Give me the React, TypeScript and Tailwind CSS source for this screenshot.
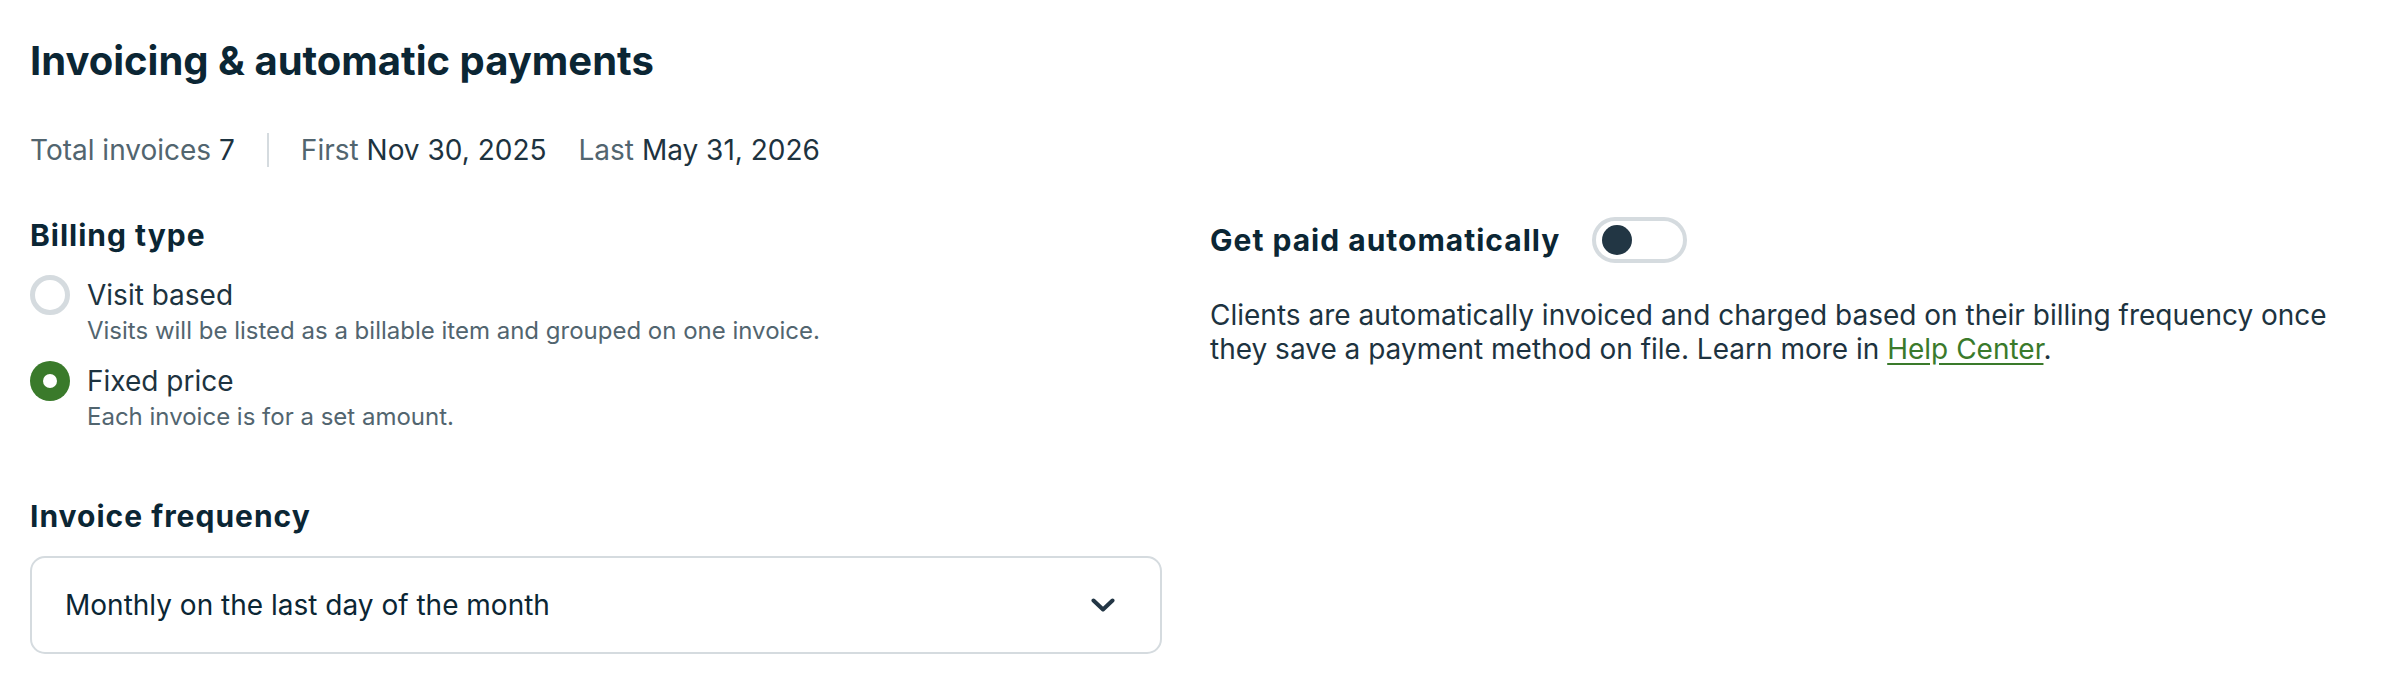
import { useState } from "react";

type BillingType = "VISIT" | "FIXED";

const billingOptions: { id: BillingType; label: string; description: string }[] = [
  {
    id: "VISIT",
    label: "Visit based",
    description: "Visits will be listed as a billable item and grouped on one invoice.",
  },
  {
    id: "FIXED",
    label: "Fixed price",
    description: "Each invoice is for a set amount.",
  },
];

function Radio({ checked }: { checked: boolean }) {
  if (checked) {
    return (
      <span className="w-[40px] h-[40px] shrink-0 rounded-full bg-[#3a7a2b] flex items-center justify-center">
        <span className="w-[14px] h-[14px] rounded-full bg-white" />
      </span>
    );
  }

  return (
    <span className="w-[40px] h-[40px] shrink-0 rounded-full border-[5px] border-[#d5dbdf] bg-white" />
  );
}

export default function App() {
  const [billing, setBilling] = useState<BillingType>("FIXED");
  const [autoPay, setAutoPay] = useState(false);

  return (
    <div className="w-[2382px] h-[686px] bg-white px-[30px] font-['Inter',sans-serif] text-[#1d3340]">
      <h2 className="pt-[37px] text-[40px] leading-[48px] font-bold text-[#0b2634]">
        Invoicing &amp; automatic payments
      </h2>

      <div className="mt-[45px] flex items-center gap-[32px] text-[28px] leading-[40px]">
        <span>
          <span className="text-[#52656f]">Total invoices</span> 7
        </span>
        <span className="w-[2px] h-[34px] bg-[#d5dbdf]" />
        <span>
          <span className="text-[#52656f]">First</span> Nov 30, 2025
        </span>
        <span>
          <span className="text-[#52656f]">Last</span> May 31, 2026
        </span>
      </div>

      <div className="mt-[47px] grid grid-cols-[1132px_1141px] gap-x-[48px]">
        <div className="flex flex-col">
          <h3 className="text-[30px] leading-[36px] tracking-[1px] font-bold text-[#0b2634]">
            Billing type
          </h3>

          <div className="mt-[22px] flex flex-col gap-[14px]">
            {billingOptions.map((option) => (
              <label
                key={option.id}
                className="flex gap-[17px] cursor-pointer"
                onClick={() => setBilling(option.id)}
              >
                <Radio checked={billing === option.id} />
                <span className="flex flex-col">
                  <span className="text-[28px] leading-[40px]">{option.label}</span>
                  <span className="text-[24px] leading-[32px] text-[#52656f]">
                    {option.description}
                  </span>
                </span>
              </label>
            ))}
          </div>

          <h3 className="mt-[65px] text-[30px] leading-[36px] tracking-[1px] font-bold text-[#0b2634]">
            Invoice frequency
          </h3>

          <button className="mt-[22px] h-[98px] w-full flex items-center justify-between pl-[33px] pr-[45px] border-2 border-[#d5dbdf] rounded-[15px] bg-white text-[28px] text-[#0b2634]">
            <span>Monthly on the last day of the month</span>
            <svg
              width="24"
              height="14"
              viewBox="0 0 24 14"
              fill="none"
              stroke="#233645"
              strokeWidth="4"
              strokeLinecap="round"
              strokeLinejoin="round"
            >
              <path d="M2.5 2.5 12 11.5 21.5 2.5" />
            </svg>
          </button>
        </div>

        <div className="flex flex-col">
          <div className="h-[46px] flex items-center gap-[32px]">
            <h3 className="text-[30px] leading-[36px] tracking-[1px] font-bold text-[#0b2634]">
              Get paid automatically
            </h3>
            <button
              className={`w-[95px] h-[46px] rounded-full border-4 border-[#d5dbdf] flex items-center px-[6px] ${
                autoPay ? "justify-end bg-[#3a7a2b]" : "justify-start bg-white"
              }`}
              onClick={() => setAutoPay(!autoPay)}
            >
              <span className="w-[30px] h-[30px] rounded-full bg-[#223644]" />
            </button>
          </div>

          <p className="mt-[35px] text-[28px] leading-[34px]">
            Clients are automatically invoiced and charged based on their billing frequency once
            they save a payment method on file. Learn more in{" "}
            <a href="#" className="text-[#3a7a2b] underline underline-offset-[4px]">
              Help Center
            </a>
            .
          </p>
        </div>
      </div>
    </div>
  );
}
